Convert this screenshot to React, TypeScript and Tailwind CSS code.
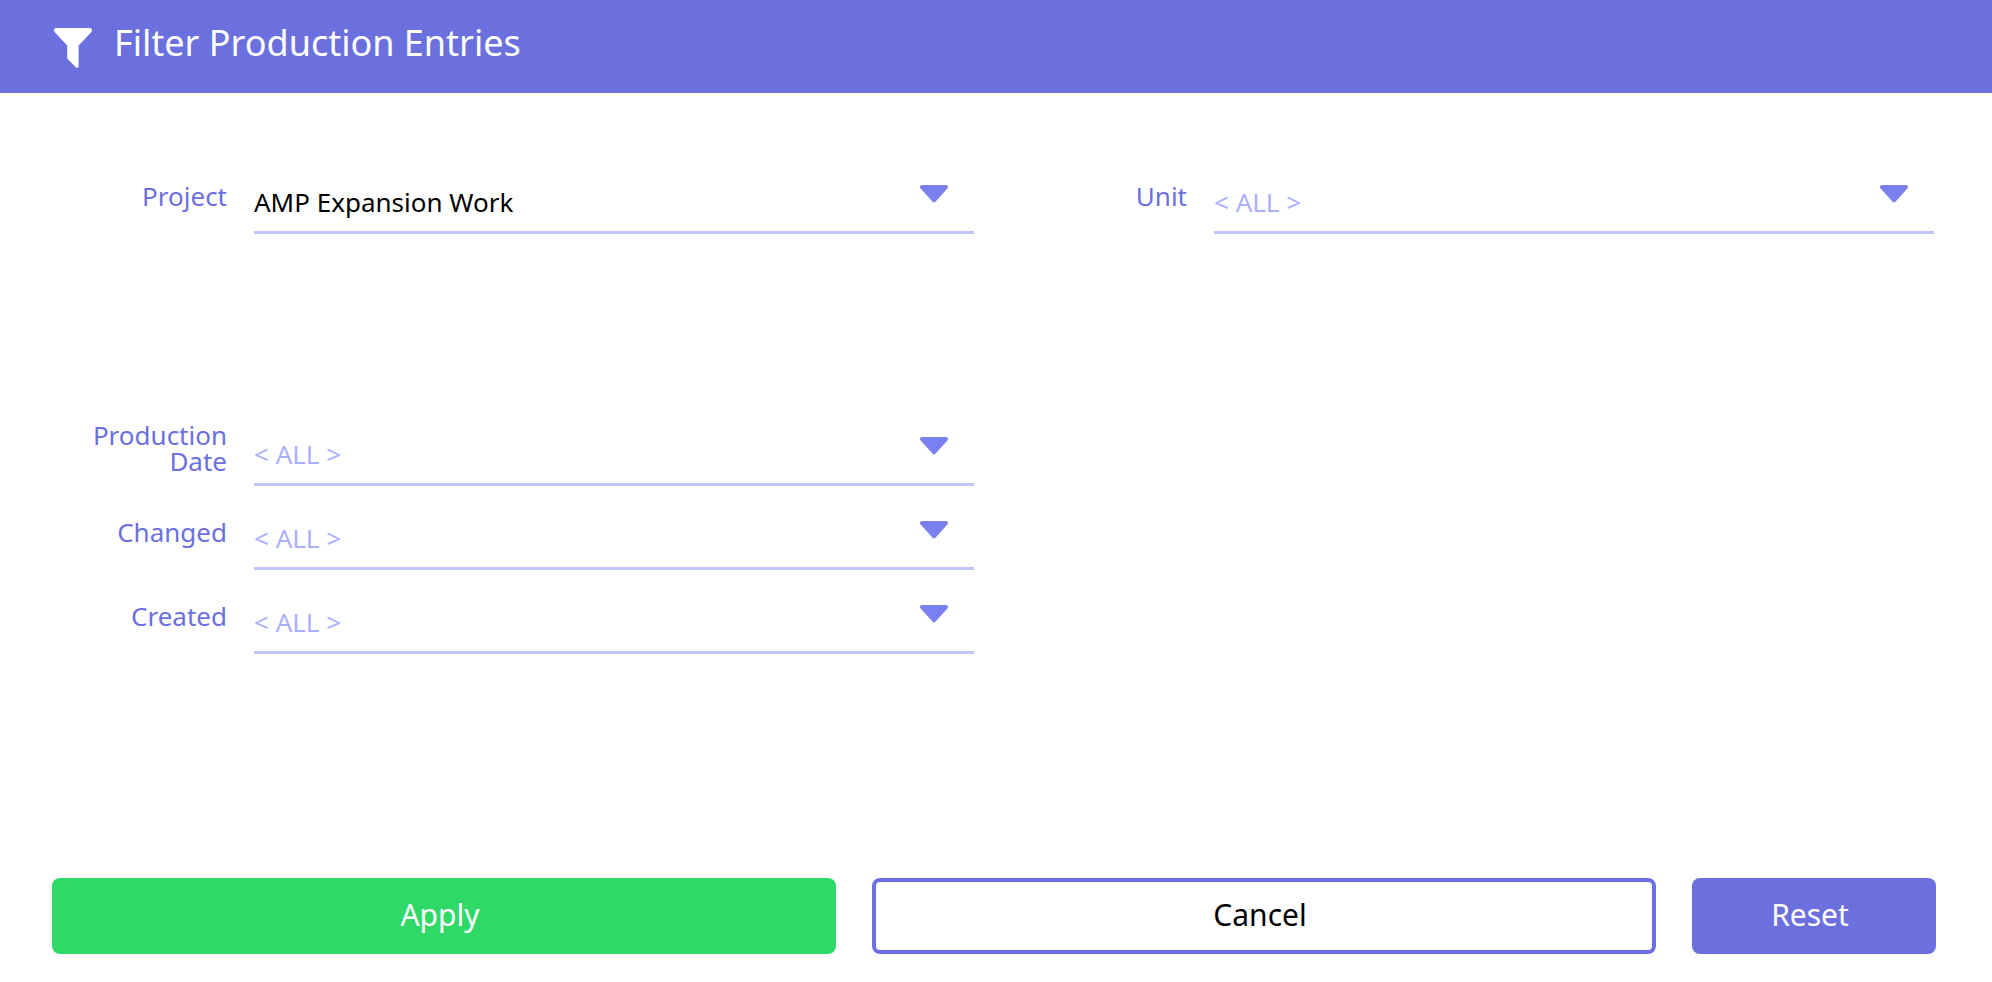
import { useState } from 'react';

type FieldName = 'project' | 'unit' | 'productionDate' | 'changed' | 'created';

const ALL = '< ALL >';

const initialFilters: Record<FieldName, string> = {
  project: 'AMP Expansion Work',
  unit: ALL,
  productionDate: ALL,
  changed: ALL,
  created: ALL,
};

const emptyFilters: Record<FieldName, string> = {
  project: ALL,
  unit: ALL,
  productionDate: ALL,
  changed: ALL,
  created: ALL,
};

function FunnelIcon() {
  return (
    <svg className="h-10 w-[38px] shrink-0" viewBox="0 0 38 40" fill="currentColor" aria-hidden="true">
      <path d="M2 0H36C38 0 38.6 2.6 37.2 4.2L24.6 17.6V38.2C24.6 39.8 23 40.4 21.8 39.2L14.4 31.8C13.6 31 13.2 30.2 13.2 29V17.6L0.8 4.2C-0.6 2.6 0 0 2 0Z" />
    </svg>
  );
}

interface SelectFieldProps {
  id: FieldName;
  label: string;
  value: string;
  options: string[];
  onChange: (id: FieldName, value: string) => void;
}

function SelectField({ id, label, value, options, onChange }: SelectFieldProps) {
  return (
    <div className="flex h-[84px] items-end gap-[27px]">
      <label
        htmlFor={id}
        className="flex h-full w-[175px] shrink-0 items-center justify-end pt-2 text-right text-[26px] leading-[26px] text-[#6b70de]"
      >
        {label}
      </label>
      <div className="relative flex-1">
        <select
          id={id}
          value={value}
          onChange={(e) => onChange(id, e.target.value)}
          className={`block h-[61px] w-full appearance-none border-b-[3px] border-[#c2c5fb] bg-transparent text-[26px] outline-none ${
            value === ALL ? 'text-[#aaafff]' : 'text-black'
          }`}
        >
          {options.map((option) => (
            <option key={option}>{option}</option>
          ))}
        </select>
        <svg
          className="pointer-events-none absolute top-3 right-[26px] h-[18px] w-7"
          viewBox="0 0 28 18"
          fill="#7b80f0"
          aria-hidden="true"
        >
          <path d="M2 0H26C28 0 28.6 2.2 27.4 3.6L15.4 16.8C14.6 17.7 13.4 17.7 12.6 16.8L0.6 3.6C-0.6 2.2 0 0 2 0Z" />
        </svg>
      </div>
    </div>
  );
}

export default function App() {
  const [filters, setFilters] = useState(initialFilters);

  const handleChange = (id: FieldName, value: string) => {
    setFilters((prev) => ({ ...prev, [id]: value }));
  };

  const dateOptions = [ALL, 'Today', 'Last 7 days', 'Last 30 days'];

  return (
    <form
      className="flex min-h-screen flex-col bg-white font-['Noto_Sans',sans-serif]"
      onSubmit={(e) => e.preventDefault()}
    >
      <header className="flex h-[93px] items-start gap-[22px] bg-[#6b70de] px-[54px] pt-7 text-white">
        <FunnelIcon />
        <h1 className="text-[36px] leading-[30px] font-normal">Filter Production Entries</h1>
      </header>

      <main className="grid grid-cols-2 gap-x-[38px] pt-[57px] pr-[58px] pl-[52px]">
        <SelectField
          id="project"
          label="Project"
          value={filters.project}
          options={[ALL, 'AMP Expansion Work']}
          onChange={handleChange}
        />
        <SelectField id="unit" label="Unit" value={filters.unit} options={[ALL]} onChange={handleChange} />
        <div className="col-start-1 pt-[168px]">
          <SelectField
            id="productionDate"
            label="Production Date"
            value={filters.productionDate}
            options={dateOptions}
            onChange={handleChange}
          />
          <SelectField
            id="changed"
            label="Changed"
            value={filters.changed}
            options={dateOptions}
            onChange={handleChange}
          />
          <SelectField
            id="created"
            label="Created"
            value={filters.created}
            options={dateOptions}
            onChange={handleChange}
          />
        </div>
      </main>

      <footer className="mt-auto grid grid-cols-[1fr_1fr_244px] gap-9 pt-9 pr-14 pb-7 pl-[52px] text-[30px]">
        <button type="submit" className="h-[76px] rounded-lg bg-[#2ed968] pr-2 pb-1 text-white">
          Apply
        </button>
        <button type="button" className="h-[76px] rounded-lg border-4 border-[#6b70de] bg-white pr-2 pb-1 text-black">
          Cancel
        </button>
        <button
          type="button"
          onClick={() => setFilters(emptyFilters)}
          className="h-[76px] rounded-lg bg-[#6b70de] pr-2 pb-1 text-white"
        >
          Reset
        </button>
      </footer>
    </form>
  );
}
